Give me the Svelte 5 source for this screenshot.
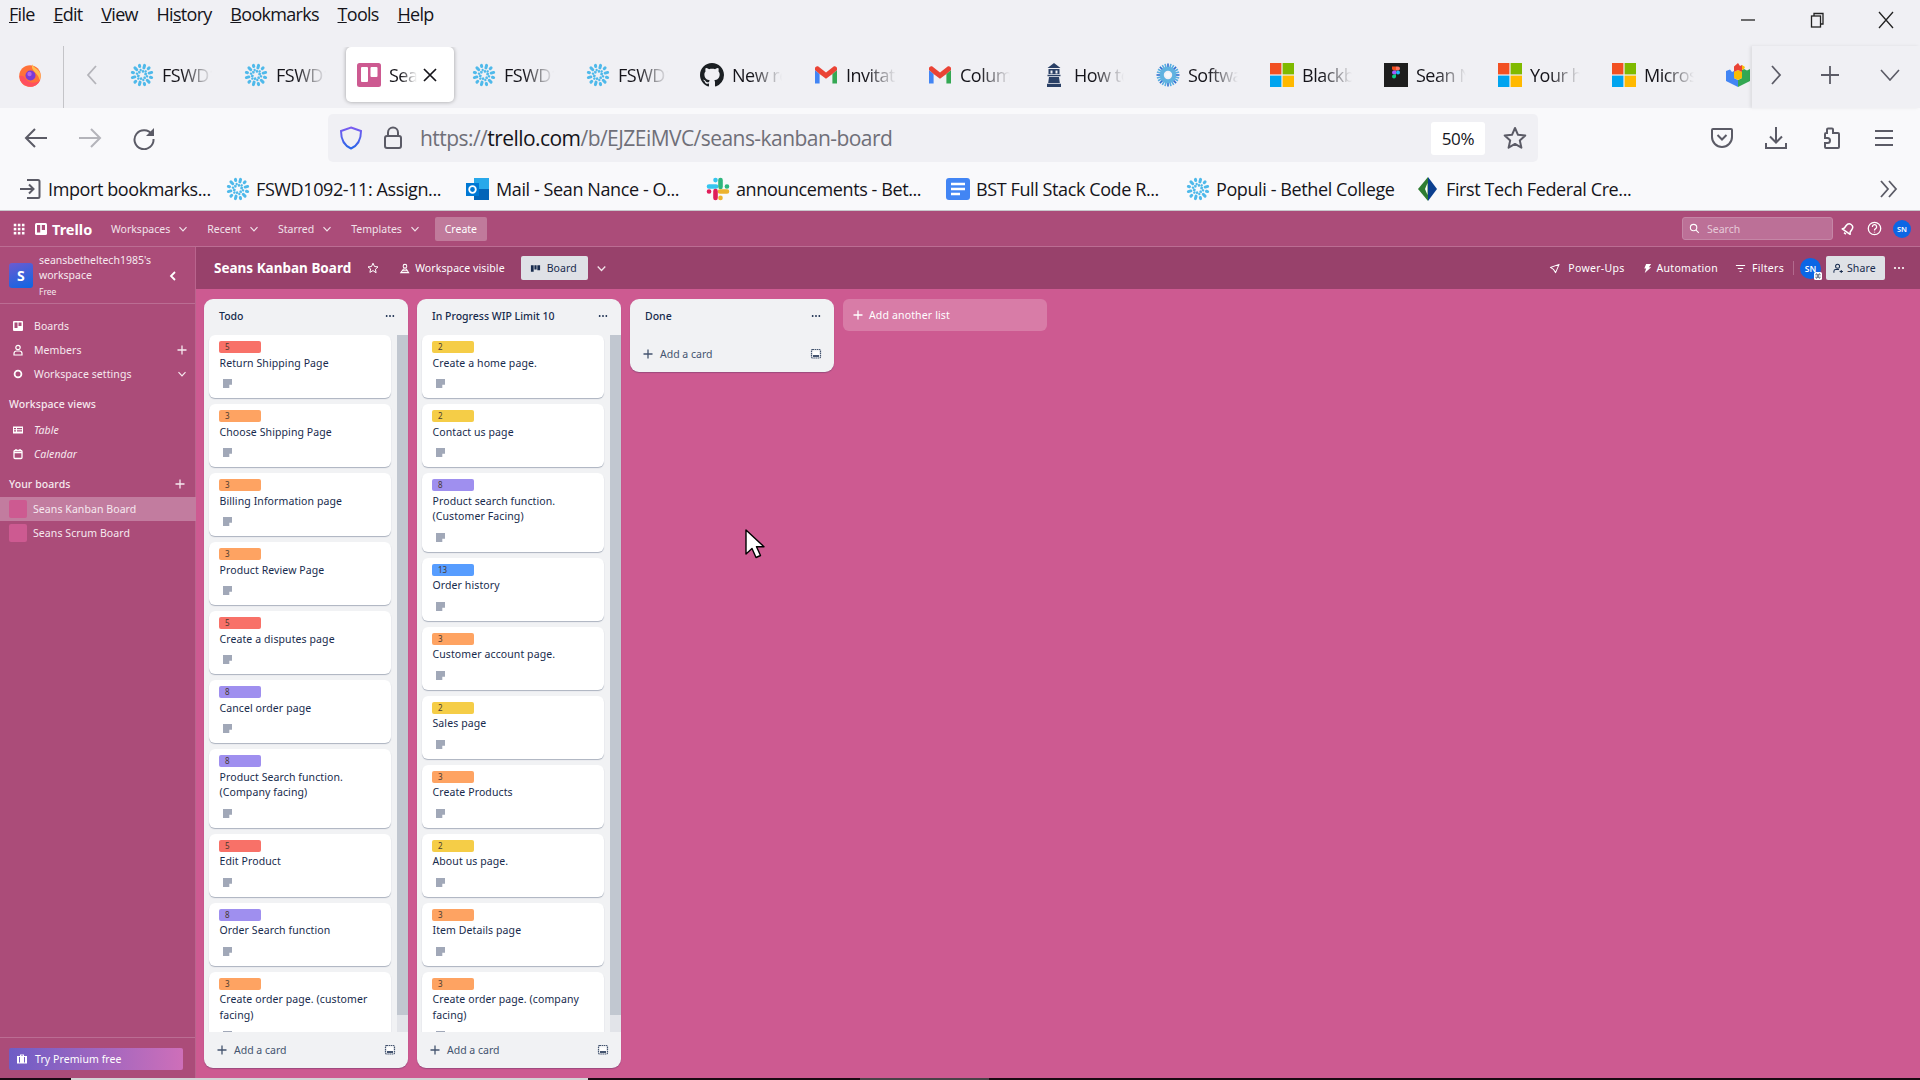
<script>
  // menu bar, tabs, bookmarks
  const menu = [['F', 'ile'], ['E', 'dit'], ['V', 'iew'], ['Hi', 's', 'tory'], ['B', 'ookmarks'], ['T', 'ools'], ['H', 'elp']];
  const tabs = [
    { icon: 'snow', text: 'FSWD1092' },
    { icon: 'snow', text: 'FSWD1092' },
    { icon: 'trello', text: 'Seans', active: true },
    { icon: 'snow', text: 'FSWD1092' },
    { icon: 'snow', text: 'FSWD1092' },
    { icon: 'github', text: 'New repository' },
    { icon: 'gmail', text: 'Invitation' },
    { icon: 'gmail', text: 'Columns' },
    { icon: 'light', text: 'How to' },
    { icon: 'gear', text: 'Software' },
    { icon: 'ms', text: 'Blackboard' },
    { icon: 'figma', text: 'Sean Nance' },
    { icon: 'ms', text: 'Your home' },
    { icon: 'ms', text: 'Microsoft' },
    { icon: 'blocks', text: '' }
  ];
  const bookmarks = [
    { icon: 'import', text: 'Import bookmarks...' },
    { icon: 'snow', text: 'FSWD1092-11: Assign...' },
    { icon: 'outlook', text: 'Mail - Sean Nance - O...' },
    { icon: 'slack', text: 'announcements - Bet...' },
    { icon: 'gdoc', text: 'BST Full Stack Code R...' },
    { icon: 'snow', text: 'Populi - Bethel College' },
    { icon: 'ftf', text: 'First Tech Federal Cre...' }
  ];

  const spokes = Array.from({ length: 12 }, (_, i) => i * 30);
  const rays = Array.from({ length: 24 }, (_, i) => i * 15);

  // colours of the card labels
  const colors = { 5: '#f87168', 3: '#fea362', 2: '#f5cd47', 8: '#9f8fef', 13: '#579dff' };

  const todo = [
    [5, 'Return Shipping Page'],
    [3, 'Choose Shipping Page'],
    [3, 'Billing Information page'],
    [3, 'Product Review Page'],
    [5, 'Create a disputes page'],
    [8, 'Cancel order page'],
    [8, 'Product Search function. (Company facing)'],
    [5, 'Edit Product'],
    [8, 'Order Search function'],
    [3, 'Create order page. (customer facing)']
  ];
  const progress = [
    [2, 'Create a home page.'],
    [2, 'Contact us page'],
    [8, 'Product search function. (Customer Facing)'],
    [13, 'Order history'],
    [3, 'Customer account page.'],
    [2, 'Sales page'],
    [3, 'Create Products'],
    [2, 'About us page.'],
    [3, 'Item Details page'],
    [3, 'Create order page. (company facing)']
  ];
  const lists = [
    { title: 'Todo', cards: todo },
    { title: 'In Progress WIP Limit 10', cards: progress }
  ];
  const navItems = ['Workspaces', 'Recent', 'Starred', 'Templates'];
</script>

{#snippet fav(name)}
  {#if name === 'snow'}
    <svg class="fav" viewBox="0 0 24 24" fill="none" stroke="#4fb9ea" stroke-width="3" stroke-linecap="round">
      {#each spokes as a}
        <g transform="rotate({a + 15} 12 12)">
          <path d={a % 60 === 0 ? 'M12 2v2.600' : 'M12 2v1.200'} />
          <path d={a % 60 === 0 ? 'M12 7.800v.8' : 'M12 6.600v.6'} stroke-width="2.200" />
        </g>
      {/each}
    </svg>
  {:else if name === 'trello'}
    <svg class="fav" viewBox="0 0 24 24"><rect width="24" height="24" rx="2.500" fill="#cd5a91" /><rect x="4" y="4" width="7" height="15" rx="1" fill="#fff" /><rect x="13.500" y="4" width="7" height="10" rx="1" fill="#fff" /></svg>
  {:else if name === 'github'}
    <svg class="fav" viewBox="0 0 16 16"><path fill="#1b1f23" d="M8 0C3.58 0 0 3.58 0 8c0 3.54 2.29 6.53 5.47 7.59.4.07.55-.17.55-.38 0-.19-.01-.82-.01-1.49-2.01.37-2.53-.49-2.69-.94-.09-.23-.48-.94-.82-1.13-.28-.15-.68-.52-.01-.53.63-.01 1.08.58 1.23.82.72 1.21 1.87.87 2.33.66.07-.52.28-.87.51-1.07-1.78-.2-3.64-.89-3.64-3.95 0-.87.31-1.59.82-2.15-.08-.2-.36-1.02.08-2.12 0 0 .67-.21 2.2.82.64-.18 1.32-.27 2-.27s1.36.09 2 .27c1.53-1.04 2.2-.82 2.2-.82.44 1.1.16 1.92.08 2.12.51.56.82 1.27.82 2.15 0 3.07-1.87 3.75-3.65 3.95.29.25.54.73.54 1.48 0 1.07-.01 1.93-.01 2.2 0 .21.15.46.55.38A8.01 8.01 0 0 0 16 8c0-4.42-3.58-8-8-8z" /></svg>
  {:else if name === 'gmail'}
    <svg class="fav" viewBox="0 0 24 24"><path fill="#4285f4" d="M1 7v13.500h4.600V11z" /><path fill="#34a853" d="M18.400 11v9.500H23V7z" /><path fill="#ea4335" d="M5.600 11 1 7V5.600c0-2 2.200-3 3.700-1.800L12 9.400l7.300-5.600C20.800 2.600 23 3.600 23 5.600V7l-4.600 4L12 15.800z" /></svg>
  {:else if name === 'light'}
    <svg class="fav" viewBox="0 0 24 24" fill="#2a4066"><path d="M12 0 5.500 5h13zM6.500 6h11v5h-11zM5.500 11.800h13v1.400h-13zM7 14h10l.8 6H6.200zM5 20.800h14V24H5z" /><path fill="#f0f0f4" d="M8.500 7.500h2v3h-2zM13.500 7.500h2v3h-2z" /></svg>
  {:else if name === 'gear'}
    <svg class="fav" viewBox="0 0 24 24" fill="none">
      {#each rays as a}
        <path d="M12 .5v5" transform="rotate({a} 12 12)" stroke={a % 45 === 0 ? '#2f6fd0' : '#58aee2'} stroke-width="1.600" />
      {/each}
      <circle cx="12" cy="12" r="6.200" stroke="#5fb2e0" stroke-width="4" />
      <circle cx="12" cy="12" r="2.600" fill="#f4f8fb" />
    </svg>
  {:else if name === 'ms'}
    <svg class="fav" viewBox="0 0 24 24"><rect width="11.400" height="11.400" fill="#f25022" /><rect x="12.600" width="11.400" height="11.400" fill="#7fba00" /><rect y="12.600" width="11.400" height="11.400" fill="#00a4ef" /><rect x="12.600" y="12.600" width="11.400" height="11.400" fill="#ffb900" /></svg>
  {:else if name === 'figma'}
    <svg class="fav" viewBox="0 0 24 24"><rect width="24" height="24" fill="#1e1e1e" /><path fill="#f24e1e" d="M8 3.500h4v4H10a2 2 0 0 1-2-2z" /><path fill="#ff7262" d="M12 3.500h2a2 2 0 0 1 0 4h-2z" /><path fill="#a259ff" d="M10 7.500h2v4h-2a2 2 0 0 1 0-4z" /><circle cx="14" cy="9.500" r="2" fill="#1abcfe" /><path fill="#0acf83" d="M10 11.500h2v2a2 2 0 1 1-2-2z" /></svg>
  {:else if name === 'blocks'}
    <svg class="fav" viewBox="0 0 24 24"><path fill="#4285f4" d="M0 8 4 6.500 6 9l2-1v7l4 2v7L0 18z" /><path fill="#34a853" d="M12 17l4-2V7l2-1 3 1.500L24 6v12l-12 6z" /><path fill="#fbbc05" d="m8 9 4-2 4 2v6l-4 2-4-2z" /><path fill="#ea4335" d="M8 9V3.500L12 0l2 3 2-1v7l-4-2z" /><path fill="#fbbc05" d="M16 2l3 2-1 2-2 1z" /></svg>
  {:else if name === 'import'}
    <svg class="fav" viewBox="0 0 24 24" fill="none" stroke="#5b5b66" stroke-width="2"><path d="M9 3h11a1.500 1.500 0 0 1 1.500 1.500v15A1.500 1.500 0 0 1 20 21H9M2 12h13M11 7.500l4.500 4.500-4.500 4.500" /></svg>
  {:else if name === 'outlook'}
    <svg class="fav" viewBox="0 0 24 24"><path fill="#28a8ea" d="M8 1h15v11H8z" /><path fill="#0364b8" d="M8 12h15v11H8z" /><path fill="#0078d4" d="M0 6h13v13H0z" /><circle cx="6.500" cy="12.500" r="3.300" fill="none" stroke="#fff" stroke-width="1.800" /></svg>
  {:else if name === 'slack'}
    <svg class="fav" viewBox="0 0 24 24" fill="none" stroke-width="4.600" stroke-linecap="round"><path stroke="#36c5f0" d="M3 9.500h7M9.500 3v.1" /><path stroke="#2eb67d" d="M14.500 3v7M21 9.500h-.1" /><path stroke="#ecb22e" d="M21 14.500h-7M14.500 21v-.1" /><path stroke="#e01e5a" d="M9.500 21v-7M3 14.500h.1" /></svg>
  {:else if name === 'gdoc'}
    <svg class="fav" viewBox="0 0 24 24"><rect y="1" width="24" height="22" rx="3" fill="#4285f4" /><path stroke="#fff" stroke-width="2.400" d="M5 7h14M5 12h14M5 17h9" /></svg>
  {:else if name === 'ftf'}
    <svg class="fav" viewBox="0 0 24 24"><path fill="#2f7d32" d="M12 0v24L2 12z" /><path fill="#0b3f8f" d="M12 0l9 12-9 12z" /><path fill="#fff" d="M11.500 6v12L9 12z" /></svg>
  {/if}
{/snippet}

{#snippet chev(cls)}
  <svg class={cls} viewBox="0 0 12 12" fill="none" stroke="currentColor" stroke-width="1.200"><path d="m2.500 4.200 3.500 3.600 3.500-3.600" /></svg>
{/snippet}

{#snippet plus(cls)}
  <svg class={cls} viewBox="0 0 12 12" fill="none" stroke="currentColor" stroke-width="1.300"><path d="M6 1.500v9M1.500 6h9" /></svg>
{/snippet}

{#snippet dots(cls)}
  <svg class={cls} viewBox="0 0 12 4" fill="currentColor"><circle cx="2" cy="2" r="1.100" /><circle cx="6" cy="2" r="1.100" /><circle cx="10" cy="2" r="1.100" /></svg>
{/snippet}

{#snippet tpl()}
  <svg class="tpl" viewBox="0 0 12 12" fill="none" stroke="#44546f" stroke-width="1.200"><rect x="1.500" y="1.500" width="9" height="8.500" rx="1" stroke-dasharray="1.500 .6" /><rect x="3" y="3.500" width="6" height="5" fill="#fff" stroke="none" /><path d="M3 8h6" stroke-width="2" /></svg>
{/snippet}

{#snippet comment()}
  <svg class="comment" viewBox="0 0 10 10"><path fill="#a1a8b8" d="M0 0h10v6.500H7V10H0z" /></svg>
{/snippet}

<div class="page">
  <div class="menubar">
    <div class="menus">
      {#each menu as m}
        <span>
          {#if m.length === 3}{m[0]}<u>{m[1]}</u>{m[2]}{:else}<u>{m[0]}</u>{m[1]}{/if}
        </span>
      {/each}
    </div>
    <div class="winctl">
      <svg viewBox="0 0 18 18" fill="none" stroke="#222" stroke-width="1.300"><path d="M2 9h14" /></svg>
      <svg viewBox="0 0 18 18" fill="none" stroke="#222" stroke-width="1.300"><rect x="3.500" y="5" width="9" height="11" /><path d="M6 5V2.500h9V13h-2.500" /></svg>
      <svg viewBox="0 0 18 18" fill="none" stroke="#222" stroke-width="1.300"><path d="m2 1 14 16M16 1 2 17" /></svg>
    </div>
  </div>

  <div class="tabbar">
    <svg class="firefox" viewBox="0 0 24 24">
      <circle cx="12" cy="13" r="10.800" fill="#ff7139" />
      <path fill="#ff4f5e" d="M1.500 13a10.800 10.800 0 0 0 21 3.500c-3 4-11 5-15-1-2-3-4-3-6-2.500z" />
      <path fill="#ffbd4f" d="M14 1c1 4 8 5 8.500 11 .3 3-1 5-1 5-1-6-5-7-7.500-12z" />
      <circle cx="12.500" cy="12.500" r="5" fill="#7b3bd6" />
      <circle cx="11.500" cy="11" r="2.200" fill="#b565e8" />
    </svg>
    <div class="tabsep"></div>
    <svg class="tabchev" viewBox="0 0 14 24" fill="none" stroke="#b4b4ba" stroke-width="1.800"><path d="M11 3 3 12l8 9" /></svg>
    <div class="tabs">
      {#each tabs as t}
        <div class="tab" class:active={t.active}>
          {@render fav(t.icon)}
          <span class="tabtext">{t.text}</span>
          {#if t.active}
            <svg class="tabx" viewBox="0 0 14 14" fill="none" stroke="#15141a" stroke-width="1.700"><path d="m1 1 12 12M13 1 1 13" /></svg>
          {/if}
        </div>
      {/each}
    </div>
    <div class="tabtools">
      <svg class="t1" viewBox="0 0 14 24" fill="none" stroke="#5b5b66" stroke-width="1.800"><path d="m3 3 8 9-8 9" /></svg>
      <svg class="t2" viewBox="0 0 18 18" fill="none" stroke="#5b5b66" stroke-width="1.800"><path d="M9 0v18M0 9h18" /></svg>
      <svg class="t3" viewBox="0 0 20 12" fill="none" stroke="#5b5b66" stroke-width="1.600"><path d="m1 1 9 10 9-10" /></svg>
    </div>
  </div>

  <div class="navbar">
    <svg class="nav back" viewBox="0 0 24 24" fill="none" stroke="#5b5b66" stroke-width="2"><path d="M23 12H2M11 3l-9 9 9 9" /></svg>
    <svg class="nav fwd" viewBox="0 0 24 24" fill="none" stroke="#b4b4ba" stroke-width="2"><path d="M1 12h21M13 3l9 9-9 9" /></svg>
    <svg class="nav reload" viewBox="0 0 24 24" fill="none" stroke="#5b5b66" stroke-width="2"><path d="M20 8.500A9.500 9.500 0 1 0 21.500 13" /><path fill="#5b5b66" stroke="none" d="M22 2v8h-8z" /></svg>
    <div class="address">
      <svg class="shield" viewBox="0 0 24 24" fill="none" stroke-width="2"><defs><linearGradient id="sh" x1="0" y1="0" x2="0" y2="1"><stop offset="0" stop-color="#7a5cf0" /><stop offset="1" stop-color="#2a66e8" /></linearGradient></defs><path stroke="url(#sh)" d="M12 1.500 22 5c0 9-3 14.500-10 17.500C5 19.500 2 14 2 5z" /></svg>
      <svg class="lock" viewBox="0 0 20 24" fill="none" stroke="#5b5b66" stroke-width="2"><rect x="2" y="10" width="16" height="12" rx="2" /><path d="M5 10V6.500a5 5 0 0 1 10 0V10" /></svg>
      <div class="url"><span class="dim">https://</span>trello.com<span class="dim">/b/EJZEiMVC/seans-kanban-board</span></div>
      <div class="zoompct">50%</div>
      <svg class="star" viewBox="0 0 24 24" fill="none" stroke="#5b5b66" stroke-width="2"><path d="m12 2 3 6.800 7.300.7-5.500 4.900 1.600 7.300L12 17.900l-6.400 3.800 1.600-7.300L1.700 9.500 9 8.800z" stroke-linejoin="round" /></svg>
    </div>
    <div class="navtools">
      <svg viewBox="0 0 24 24" fill="none" stroke="#5b5b66" stroke-width="2"><path d="M3 3h18a1 1 0 0 1 1 1v7a10 10 0 0 1-20 0V4a1 1 0 0 1 1-1z" /><path d="m7.500 9 4.500 4.500L16.500 9" /></svg>
      <svg viewBox="0 0 24 24" fill="none" stroke="#5b5b66" stroke-width="2"><path d="M12 1v15M6 10.500l6 6 6-6M2 17v5h20v-5" /></svg>
      <svg viewBox="0 0 24 24" fill="none" stroke="#5b5b66" stroke-width="2"><path d="M10 2.500h4a1 1 0 0 1 1 1V7h5a1 1 0 0 1 1 1v13a1 1 0 0 1-1 1H8a1 1 0 0 1-1-1v-4h2.500a2.500 2.500 0 0 0 0-5H7V8a1 1 0 0 1 1-1h1V3.500a1 1 0 0 1 1-1z" /></svg>
      <svg viewBox="0 0 24 24" fill="none" stroke="#5b5b66" stroke-width="2"><path d="M3 5h18M3 12h18M3 19h18" /></svg>
    </div>
  </div>

  <div class="bookbar">
    {#each bookmarks as b, i}
      <div class="bm bm{i}">
        {@render fav(b.icon)}
        <span>{b.text}</span>
      </div>
    {/each}
    <svg class="bmmore" viewBox="0 0 20 18" fill="none" stroke="#5b5b66" stroke-width="1.800"><path d="m2 1 7 8-7 8M10 1l7 8-7 8" /></svg>
  </div>

  <div class="app">
    <header class="top">
      <svg class="grid" viewBox="0 0 12 12" fill="#fff">
        {#each [1.5, 5, 8.5] as y}
          {#each [1.5, 5, 8.5] as x}
            <rect {x} {y} width="2.200" height="2.200" />
          {/each}
        {/each}
      </svg>
      <div class="logo">
        <svg viewBox="0 0 12 12"><rect width="12" height="12" rx="1.500" fill="#fff" /><rect x="2" y="2" width="3.200" height="7.500" fill="#ab4c79" /><rect x="6.800" y="2" width="3.200" height="5" fill="#ab4c79" /></svg>
        <span>Trello</span>
      </div>
      {#each navItems as n}
        <div class="topnav"><span>{n}</span>{@render chev('chev')}</div>
      {/each}
      <div class="create">Create</div>
      <div class="topright">
        <div class="search">
          <svg viewBox="0 0 12 12" fill="none" stroke="#fff" stroke-width="1.200"><circle cx="5" cy="5" r="3.500" /><path d="m7.700 7.700 3 3" /></svg>
          <span>Search</span>
        </div>
        <svg class="bell" viewBox="0 0 14 14" fill="none" stroke="#fff" stroke-width="1.500" stroke-linejoin="round"><g transform="rotate(35 7 7)"><path d="M7 1.500c2.300 0 3.500 1.800 3.500 4v2.700l1.300 2H2.200l1.300-2V5.500c0-2.200 1.200-4 3.500-4z" /><path d="M5.800 12.300h2.400" /></g></svg>
        <svg class="help" viewBox="0 0 14 14" fill="none" stroke="#fff" stroke-width="1.200"><circle cx="7" cy="7" r="5.800" /><path d="M5 5.500a2 2 0 1 1 2.800 1.800C7.200 7.600 7 8 7 8.800M7 10v.8" /></svg>
        <div class="avatar small">SN</div>
      </div>
    </header>

    <div class="main">
      <aside class="side">
        <div class="wshead">
          <div class="wslogo">S</div>
          <div class="wsname">
            <div>seansbetheltech1985's</div>
            <div>workspace</div>
            <div class="free">Free</div>
          </div>
          <svg class="collapse" viewBox="0 0 8 12" fill="none" stroke="#fff" stroke-width="1.800"><path d="M6 2 2 6l4 4" /></svg>
        </div>

        <nav class="sidenav">
          <div class="item">
            <svg viewBox="0 0 12 12"><rect x="1" y="1" width="10" height="10" rx="1" fill="#fff" /><rect x="2.500" y="2.500" width="3" height="5.500" fill="#ab4c79" /><rect x="6.500" y="2.500" width="3" height="3.500" fill="#ab4c79" /></svg>
            <span>Boards</span>
          </div>
          <div class="item">
            <svg viewBox="0 0 12 12" fill="none" stroke="#fff" stroke-width="1.200"><circle cx="6" cy="3.500" r="2.200" /><path d="M2 11V9.500a2.500 2.500 0 0 1 2.500-2.500h3A2.500 2.500 0 0 1 10 9.500V11z" /></svg>
            <span>Members</span>
            {@render plus('itemend')}
          </div>
          <div class="item">
            <svg viewBox="0 0 12 12" fill="none" stroke="#fff" stroke-width="1.800"><circle cx="6" cy="6" r="3.400" /></svg>
            <span>Workspace settings</span>
            {@render chev('itemend')}
          </div>
        </nav>

        <div class="sidehead views">Workspace views</div>
        <div class="item it">
          <svg viewBox="0 0 12 12" fill="#fff"><path d="M1 2.500h10v7H1zM2 4v1.200h2V4zm3 0v1.200h5V4zM2 6.200v1.200h2V6.200zm3 0v1.200h5V6.200z" fill-rule="evenodd" /></svg>
          <span>Table</span>
        </div>
        <div class="item it">
          <svg viewBox="0 0 12 12" fill="none" stroke="#fff" stroke-width="1.300"><rect x="2" y="2.500" width="8" height="8" rx="1" /><path d="M2 4.500h8M4 1v2M8 1v2" /></svg>
          <span>Calendar</span>
        </div>

        <div class="sidehead boardshead"><span>Your boards</span>{@render plus('boardsplus')}</div>
        <div class="boardrow current"><i></i><span>Seans Kanban Board</span></div>
        <div class="boardrow"><i></i><span>Seans Scrum Board</span></div>

        <div class="premium">
          <div class="prembtn">
            <svg viewBox="0 0 12 12" fill="#fff"><path fill-rule="evenodd" d="M1 3h10v7.500H1zM4 1.500h4V3H7V2.500H5V3H4zM3 4v5.500h1V4zm5 0v5.500h1V4z" /></svg>
            <span>Try Premium free</span>
          </div>
        </div>
      </aside>

      <div class="boardwrap">
        <div class="boardbar">
          <h1>Seans Kanban Board</h1>
          <svg class="bstar" viewBox="0 0 12 12" fill="none" stroke="#fff" stroke-width="1"><path d="m6 1.200 1.500 3.300 3.500.4-2.600 2.400.7 3.500L6 8.600l-3.100 1.800.7-3.500L1 4.900l3.500-.4z" /></svg>
          <div class="bb vis">
            <svg viewBox="0 0 12 12" fill="none" stroke="#fff" stroke-width="1.100"><circle cx="6.500" cy="3.500" r="2" /><path d="M2 10.500 5 6.500h3l2.500 4zM4 8.500h5" /></svg>
            <span>Workspace visible</span>
          </div>
          <div class="boardbtn">
            <svg viewBox="0 0 12 12" fill="#172b4d"><path d="M1 2.500h3v7H1zM4.800 2.500h2.400v4.500H4.800zM8 2.500h3v5.500H8z" /></svg>
            <span>Board</span>
          </div>
          {@render chev('bchev')}
          <div class="bbright">
            <div class="bb pups">
              <svg viewBox="0 0 12 12" fill="none" stroke="#fff" stroke-width="1.100"><path d="M11 1.500 1.500 4.800 5 7l2.200 3.500z" stroke-linejoin="round" /></svg>
              <span>Power-Ups</span>
            </div>
            <div class="bb auto">
              <svg viewBox="0 0 12 12" fill="#fff"><path d="M4.500 1H10L7.500 4.500H10L3 11l1.500-5H2.500z" /></svg>
              <span>Automation</span>
            </div>
            <div class="bb filt">
              <svg viewBox="0 0 12 12" fill="none" stroke="#fff" stroke-width="1.100"><path d="M1 2.800h10M3 6h6M5 9.200h2" /></svg>
              <span>Filters</span>
            </div>
            <div class="vsep"></div>
            <div class="avatar big">SN
              <svg class="badge" viewBox="0 0 10 10"><rect width="10" height="10" rx="2" fill="#fff" /><path d="M1.500 3.500h7M1.500 6.500h7M3 1.500l4 7M7 1.500l-4 7" stroke="#44546f" stroke-width=".9" /></svg>
            </div>
            <div class="share">
              <svg viewBox="0 0 12 12" fill="none" stroke="#172b4d" stroke-width="1.100"><circle cx="5" cy="3.500" r="2.200" /><path d="M1 10.500V9a2 2 0 0 1 2-2h3.500M9 7.500v3.500M7.200 9.200h3.600" /></svg>
              <span>Share</span>
            </div>
            {@render dots('bdots')}
          </div>
        </div>

        <div class="board">
          {#each lists as l}
            <section class="list">
              <div class="lhead"><span>{l.title}</span>{@render dots('ldots')}</div>
              <div class="scrollarea">
                <div class="cards">
                  {#each l.cards as c}
                    <article class="card">
                      <div class="label" style="background: {colors[c[0]]}">{c[0]}</div>
                      <div class="title">{c[1]}</div>
                      {@render comment()}
                    </article>
                  {/each}
                </div>
                <div class="scroll"><div class="thumb"></div></div>
              </div>
              <div class="lfoot">
                {@render plus('fplus')}<span>Add a card</span>{@render tpl()}
              </div>
            </section>
          {/each}
          <section class="list done">
            <div class="lhead"><span>Done</span>{@render dots('ldots')}</div>
            <div class="lfoot">
              {@render plus('fplus')}<span>Add a card</span>{@render tpl()}
            </div>
          </section>
          <div class="addlist">
            {@render plus('addplus')}<span>Add another list</span>
          </div>
        </div>
      </div>
    </div>
  </div>

  <div class="taskstrip">
    <div class="s1"></div>
    <div class="s2"></div>
    <div class="s3"></div>
    <div class="s4"></div>
    <div class="s5"></div>
  </div>

  <svg class="cursor" viewBox="0 0 20 30"><path d="M1 1v24l6-5.500 4 9 4.500-2-4-8.800H19z" fill="#fff" stroke="#000" stroke-width="1.400" stroke-linejoin="round" /></svg>
</div>

<style>
  :global(body) {
    margin: 0;
    background: #cd5a91;
  }

  .page {
    position: relative;
    width: 1920px;
    height: 1080px;
    overflow: hidden;
    display: flex;
    flex-direction: column;
    font-family: "Open Sans", "Noto Sans", sans-serif;
    color: #15141a;
  }

  /* window menu */
  .menubar {
    height: 46px;
    flex: none;
    background: #f0f0f4;
    display: flex;
    align-items: flex-start;
    justify-content: space-between;
  }

  .menus {
    display: flex;
    gap: 18.700px;
    padding: 2px 0 0 9px;
    font-size: 18px;
    line-height: 24px;
    letter-spacing: -0.7px;
  }

  .winctl {
    display: flex;
    gap: 51px;
    padding: 11px 25px 0 0;
  }

  .winctl svg {
    width: 18px;
    height: 18px;
  }

  /* tabs */
  .tabbar {
    height: 62px;
    flex: none;
    box-sizing: border-box;
    padding-bottom: 4px;
    background: #f0f0f4;
    display: flex;
    align-items: center;
    position: relative;
  }

  .firefox {
    width: 24px;
    height: 26px;
    margin-left: 18px;
  }

  .tabsep {
    width: 1px;
    height: 62px;
    margin-bottom: -4px;
    background: #c4c4c8;
    margin-left: 21px;
  }

  .tabchev {
    width: 14px;
    height: 24px;
    margin-left: 21px;
  }

  /* tab strip lies under the tool buttons, last tab gets cut */
  .tabs {
    position: absolute;
    left: 118px;
    top: 1px;
    width: 1634px;
    display: flex;
    gap: 6px;
    overflow: hidden;
    padding: 0 4px 4px 0;
    box-sizing: border-box;
  }

  .tab {
    flex: none;
    width: 108px;
    height: 55px;
    box-sizing: border-box;
    padding-left: 12px;
    display: flex;
    align-items: center;
    gap: 8px;
    border-radius: 5px;
    position: relative;
  }

  .tab.active {
    background: #fff;
    box-shadow: 0 0 4px rgba(0, 0, 0, 0.35);
    padding-left: 11px;
  }

  .fav {
    width: 24px;
    height: 24px;
    flex: none;
  }

  .tabtext {
    font-size: 18px;
    letter-spacing: -0.5px;
    width: 50px;
    white-space: nowrap;
    overflow: hidden;
    -webkit-mask-image: linear-gradient(90deg, #000 40%, transparent 100%);
    mask-image: linear-gradient(90deg, #000 40%, transparent 100%);
  }

  .active .tabtext {
    width: 28px;
  }

  .tabx {
    width: 14px;
    height: 14px;
    position: absolute;
    right: 17px;
  }

  .tabtools {
    position: absolute;
    left: 1752px;
    right: 0;
    top: 0;
    height: 62px;
    background: #f0f0f4;
    box-shadow: -2px 0 3px rgba(0, 0, 0, 0.08);
    display: flex;
    align-items: center;
    padding-bottom: 4px;
    box-sizing: border-box;
  }

  .t1 {
    width: 14px;
    height: 24px;
    margin-left: 17px;
  }

  .t2 {
    width: 18px;
    height: 18px;
    margin-left: 38px;
  }

  .t3 {
    width: 20px;
    height: 12px;
    margin-left: 41px;
  }

  /* url bar */
  .navbar {
    height: 60px;
    flex: none;
    background: #f9f9fb;
    display: flex;
    align-items: center;
  }

  .nav {
    width: 24px;
    height: 24px;
    flex: none;
  }

  .back {
    margin-left: 24px;
  }

  .fwd {
    margin-left: 30px;
  }

  .reload {
    margin-left: 30px;
  }

  .address {
    margin-left: 172px;
    width: 1210px;
    height: 48px;
    background: #f0f0f4;
    border-radius: 5px;
    display: flex;
    align-items: center;
    flex: none;
  }

  .shield {
    width: 24px;
    height: 24px;
    margin-left: 11px;
  }

  .lock {
    width: 20px;
    height: 24px;
    margin-left: 20px;
  }

  .url {
    margin-left: 17px;
    font-size: 21px;
    letter-spacing: -0.55px;
    width: 1011px;
    white-space: nowrap;
  }

  .dim {
    color: #6f6f78;
  }

  .zoompct {
    width: 54px;
    height: 33px;
    line-height: 33px;
    text-align: center;
    background: #fff;
    border-radius: 3px;
    font-size: 17px;
    letter-spacing: -0.3px;
  }

  .star {
    width: 24px;
    height: 24px;
    margin-left: 18px;
  }

  .navtools {
    display: flex;
    gap: 30px;
    margin-left: 172px;
  }

  .navtools svg {
    width: 24px;
    height: 24px;
    flex: none;
  }

  /* bookmarks */
  .bookbar {
    height: 43px;
    flex: none;
    box-sizing: border-box;
    background: #f9f9fb;
    display: flex;
    align-items: center;
    padding-left: 18px;
    font-size: 18px;
    letter-spacing: -0.4px;
    border-bottom: 1px solid #c8c8cc;
  }

  .bm {
    display: flex;
    align-items: center;
    gap: 6px;
    white-space: nowrap;
    flex: none;
  }

  .bm0 { width: 208px; }
  .bm1 { width: 240px; }
  .bm2 { width: 240px; }
  .bm3 { width: 240px; }
  .bm4 { width: 240px; }
  .bm5 { width: 230px; }

  .bmmore {
    width: 20px;
    height: 18px;
    margin-left: auto;
    margin-right: 21px;
  }

  /* trello */
  .app {
    flex: 1;
    display: flex;
    flex-direction: column;
    min-height: 0;
    font-family: "Noto Sans", "Open Sans", sans-serif;
    background: #cd5a91;
  }

  .top {
    height: 36px;
    box-sizing: border-box;
    flex: none;
    background: #ab4c79;
    border-bottom: 1px solid #bb6d93;
    display: flex;
    align-items: center;
    color: #f1e3ea;
    font-size: 10.500px;
    padding-left: 12px;
  }

  .grid {
    width: 14px;
    height: 14px;
    flex: none;
  }

  .logo {
    display: flex;
    align-items: center;
    gap: 5px;
    margin-left: 9px;
    font-size: 14.500px;
    font-weight: 700;
    color: #fff;
    width: 76px;
  }

  .logo svg {
    width: 12px;
    height: 12px;
  }

  .topnav {
    display: flex;
    align-items: center;
    gap: 7px;
    margin-right: 18px;
  }

  .chev {
    width: 12px;
    height: 12px;
  }

  .create {
    height: 24px;
    line-height: 24px;
    width: 52px;
    text-align: center;
    background: #c07a9b;
    border-radius: 2px;
    color: #fff;
    margin-left: -4px;
  }

  .topright {
    margin-left: auto;
    display: flex;
    align-items: center;
  }

  .search {
    width: 151px;
    height: 23px;
    box-sizing: border-box;
    background: #bc7097;
    border: 1px solid #c586a6;
    border-radius: 3px;
    display: flex;
    align-items: center;
    gap: 7px;
    padding-left: 6px;
    color: #e6c9d8;
  }

  .search svg {
    width: 11px;
    height: 11px;
  }

  .bell {
    width: 14px;
    height: 14px;
    margin-left: 8px;
  }

  .help {
    width: 15px;
    height: 15px;
    margin-left: 12px;
  }

  .avatar {
    border-radius: 50%;
    background: #0c66e4;
    color: #fff;
    display: flex;
    align-items: center;
    justify-content: center;
    font-weight: 600;
    position: relative;
    flex: none;
  }

  .small {
    width: 18px;
    height: 18px;
    font-size: 7.500px;
    margin: 0 9px 0 11px;
  }

  .big {
    width: 21px;
    height: 21px;
    font-size: 8.500px;
  }

  .badge {
    position: absolute;
    right: -1px;
    bottom: -1px;
    width: 8px;
    height: 8px;
  }

  .main {
    flex: 1;
    display: flex;
    min-height: 0;
  }

  /* sidebar */
  .side {
    width: 195px;
    flex: none;
    background: #ab4c79;
    border-right: 1px solid #b9648d;
    color: #f6e9ef;
    font-size: 10.500px;
    letter-spacing: 0.08px;
    display: flex;
    flex-direction: column;
  }

  .wshead {
    height: 56px;
    flex: none;
    border-bottom: 1px solid #bb6d93;
    display: flex;
    align-items: center;
    padding-left: 9px;
    position: relative;
  }

  .wslogo {
    width: 24px;
    height: 25px;
    border-radius: 3px;
    background: linear-gradient(160deg, #6d5bd0, #0c66e4);
    color: #fff;
    font-weight: 700;
    font-size: 14px;
    text-align: center;
    line-height: 25px;
    flex: none;
  }

  .wsname {
    margin-left: 6px;
    line-height: 15.500px;
    margin-top: 2px;
    letter-spacing: 0;
  }

  .free {
    font-size: 8.500px;
    line-height: 16px;
  }

  .collapse {
    position: absolute;
    right: 18px;
    top: 23px;
    width: 8px;
    height: 12px;
  }

  .sidenav {
    padding-top: 10px;
  }

  .item {
    height: 24px;
    display: flex;
    align-items: center;
    padding-left: 12px;
    gap: 10px;
    position: relative;
  }

  .item svg {
    width: 12px;
    height: 12px;
    flex: none;
  }

  .item .itemend {
    position: absolute;
    right: 7px;
    top: 6px;
  }

  .it {
    font-style: italic;
  }

  .sidehead {
    padding-left: 9px;
    line-height: 16px;
    font-weight: 500;
  }

  .views {
    margin: 10px 0 6px;
  }

  .boardshead {
    margin: 10px 0 5px;
    display: flex;
    align-items: center;
    justify-content: space-between;
    padding-right: 9px;
  }

  .boardsplus {
    width: 12px;
    height: 12px;
  }

  .boardrow {
    height: 24px;
    display: flex;
    align-items: center;
    padding-left: 9px;
    gap: 6px;
  }

  .boardrow i {
    width: 18px;
    height: 18px;
    border-radius: 2px;
    background: #cd5a91;
  }

  .current {
    background: #c27c9f;
    margin-right: -1px;
  }

  .premium {
    margin-top: auto;
    border-top: 1px solid #bb6d93;
    height: 41px;
    padding: 10px 9px 0;
    box-sizing: border-box;
  }

  .prembtn {
    height: 22px;
    width: 174px;
    border-radius: 2px;
    background: linear-gradient(90deg, #6e5dc6, #ce6fb9);
    display: flex;
    align-items: center;
    gap: 7px;
    padding-left: 7px;
    box-sizing: border-box;
    color: #fff;
  }

  .prembtn svg {
    width: 12px;
    height: 12px;
  }

  /* board */
  .boardwrap {
    flex: 1;
    display: flex;
    flex-direction: column;
    min-width: 0;
  }

  .boardbar {
    height: 42px;
    flex: none;
    background: #98416b;
    display: flex;
    align-items: center;
    padding-left: 18px;
    color: #fff;
    font-size: 10.500px;
    letter-spacing: 0.1px;
  }

  h1 {
    margin: 0;
    font-size: 13.500px;
    font-weight: 700;
    line-height: 20px;
    letter-spacing: 0;
  }

  .bstar {
    width: 12px;
    height: 12px;
    margin-left: 16px;
  }

  .bb {
    display: flex;
    align-items: center;
    gap: 5px;
  }

  .bb svg {
    width: 11px;
    height: 11px;
  }

  .vis {
    margin-left: 20px;
  }

  .boardbtn {
    height: 24px;
    width: 67px;
    margin-left: 16px;
    background: #dfe1e6;
    border-radius: 2px;
    color: #172b4d;
    display: flex;
    align-items: center;
    gap: 6px;
    padding-left: 9px;
    box-sizing: border-box;
  }

  .boardbtn svg {
    width: 11px;
    height: 11px;
  }

  .bchev {
    width: 13px;
    height: 13px;
    margin-left: 7px;
    color: #f1e3ea;
  }

  .bbright {
    margin-left: auto;
    display: flex;
    align-items: center;
  }

  .bbright .bb {
    margin-right: 17px;
    letter-spacing: 0.3px;
  }

  .bbright .pups {
    gap: 8px;
  }

  .bbright .auto {
    gap: 4px;
  }

  .bbright .filt {
    gap: 6px;
    margin-right: 9px;
  }

  .vsep {
    width: 1px;
    height: 14px;
    background: #b26a8d;
    margin-right: 6px;
  }

  .share {
    width: 59px;
    height: 24px;
    margin-left: 5px;
    background: #dfe1e6;
    border-radius: 2px;
    color: #172b4d;
    display: flex;
    align-items: center;
    gap: 3px;
    padding-left: 7px;
    box-sizing: border-box;
  }

  .share svg {
    width: 11px;
    height: 11px;
  }

  .bdots {
    width: 12px;
    height: 4px;
    margin: 0 15px 0 8px;
    color: #fff;
  }

  .board {
    flex: 1;
    min-height: 0;
    display: flex;
    align-items: flex-start;
    gap: 9px;
    padding: 10px 0 10px 8px;
  }

  .list {
    width: 204px;
    flex: none;
    max-height: 100%;
    height: 769px;
    background: #f1f2f4;
    border-radius: 9px;
    box-shadow: 0 1px 1px rgba(9, 30, 66, 0.25);
    display: flex;
    flex-direction: column;
    overflow: hidden;
    color: #172b4d;
    font-size: 10.500px;
  }

  .done {
    height: 73px;
  }

  .done .lfoot {
    height: 37px;
    padding-top: 1px;
  }

  .lhead {
    height: 36px;
    box-sizing: border-box;
    padding: 0 13px 2px 15px;
    flex: none;
    display: flex;
    align-items: center;
    justify-content: space-between;
    font-weight: 500;
    color: #172b4d;
  }

  .ldots {
    width: 10px;
    height: 4px;
  }

  .scrollarea {
    flex: 1;
    min-height: 0;
    display: flex;
    overflow: hidden;
  }

  .cards {
    width: 193px;
    flex: none;
    box-sizing: border-box;
    padding: 0 6px 0 5px;
    display: flex;
    flex-direction: column;
    gap: 6px;
    overflow: hidden;
  }

  .card {
    background: #fff;
    border-radius: 6px;
    box-shadow: 0 1px 1px rgba(9, 30, 66, 0.3);
    padding: 6px 10px 10px;
    box-sizing: border-box;
    flex: none;
  }

  .label {
    width: 42px;
    height: 12px;
    border-radius: 2px;
    font-size: 8px;
    line-height: 12px;
    padding-left: 6px;
    box-sizing: border-box;
    color: #4a3a30;
  }

  .title {
    margin: 2.500px 0 0 .5px;
    line-height: 15.500px;
    color: #172b4d;
    letter-spacing: 0.1px;
  }

  .comment {
    display: block;
    width: 9px;
    height: 9px;
    margin: 8px 0 0 4px;
  }

  .scroll {
    width: 11px;
    flex: none;
    background: #e2e4e9;
  }

  .thumb {
    height: 680px;
    background: #c1c7d0;
  }

  .lfoot {
    height: 36px;
    box-sizing: border-box;
    flex: none;
    display: flex;
    align-items: center;
    padding: 0 12px 0 12px;
    color: #44546f;
  }

  .fplus {
    width: 12px;
    height: 12px;
    margin-right: 6px;
  }

  .tpl {
    width: 12px;
    height: 12px;
    margin-left: auto;
  }

  .addlist {
    width: 204px;
    height: 32px;
    flex: none;
    box-sizing: border-box;
    background: #d87ca7;
    border-radius: 6px;
    display: flex;
    align-items: center;
    padding-left: 9px;
    gap: 5px;
    color: #fff;
    font-size: 10.500px;
    letter-spacing: 0.15px;
  }

  .addplus {
    width: 12px;
    height: 12px;
  }

  /* sliver of the os taskbar at the very bottom */
  .taskstrip {
    height: 2px;
    flex: none;
    display: flex;
    background: #1a0a12;
  }

  .s1 { width: 71px; }
  .s2 { width: 517px; background: #d4d4d6; }
  .s3 { width: 272px; }
  .s4 { width: 129px; background: #4a4248; }

  .cursor {
    position: absolute;
    left: 745px;
    top: 529px;
    width: 20px;
    height: 30px;
  }
</style>
